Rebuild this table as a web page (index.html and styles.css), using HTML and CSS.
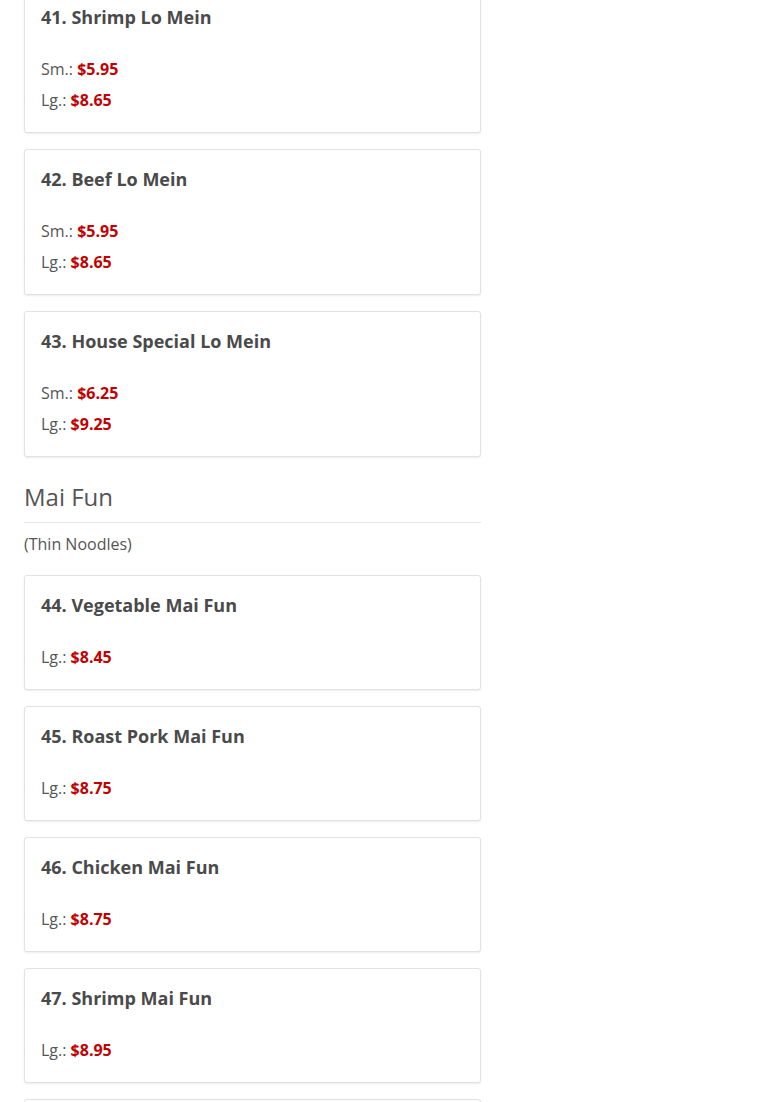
FILE: index.html
```html
<!DOCTYPE html>
<html>
<head>
<meta charset="utf-8">
<link rel="stylesheet" href="styles.css">
</head>
<body>
<div class="menu">
  <div class="card">
    <h3 class="title">41. Shrimp Lo Mein</h3>
    <div class="prices">
      <div class="row">Sm.: <span class="price">$5.95</span></div>
      <div class="row">Lg.: <span class="price">$8.65</span></div>
    </div>
  </div>
  <div class="card">
    <h3 class="title">42. Beef Lo Mein</h3>
    <div class="prices">
      <div class="row">Sm.: <span class="price">$5.95</span></div>
      <div class="row">Lg.: <span class="price">$8.65</span></div>
    </div>
  </div>
  <div class="card">
    <h3 class="title">43. House Special Lo Mein</h3>
    <div class="prices">
      <div class="row">Sm.: <span class="price">$6.25</span></div>
      <div class="row">Lg.: <span class="price">$9.25</span></div>
    </div>
  </div>

  <h2 class="section">Mai Fun</h2>
  <p class="note">(Thin Noodles)</p>

  <div class="card">
    <h3 class="title">44. Vegetable Mai Fun</h3>
    <div class="prices">
      <div class="row">Lg.: <span class="price">$8.45</span></div>
    </div>
  </div>
  <div class="card">
    <h3 class="title">45. Roast Pork Mai Fun</h3>
    <div class="prices">
      <div class="row">Lg.: <span class="price">$8.75</span></div>
    </div>
  </div>
  <div class="card">
    <h3 class="title">46. Chicken Mai Fun</h3>
    <div class="prices">
      <div class="row">Lg.: <span class="price">$8.75</span></div>
    </div>
  </div>
  <div class="card">
    <h3 class="title">47. Shrimp Mai Fun</h3>
    <div class="prices">
      <div class="row">Lg.: <span class="price">$8.95</span></div>
    </div>
  </div>
  <div class="card">
    <h3 class="title">48. Beef Mai Fun</h3>
    <div class="prices">
      <div class="row">Lg.: <span class="price">$8.95</span></div>
    </div>
  </div>
</div>
</body>
</html>
```

FILE: styles.css
```css
html, body {
  margin: 0;
  padding: 0;
  background: #fff;
  overflow: hidden;
}
body {
  font-family: "Open Sans", "Liberation Sans", sans-serif;
  color: #555;
  font-size: 16px;
}
.menu {
  width: 457px;
  margin: -13px 0 0 24px;
}
.card {
  border: 1px solid #e2e2e2;
  border-radius: 3px;
  box-shadow: 0 1px 2px rgba(0, 0, 0, 0.08);
  padding: 16px;
  margin-bottom: 16px;
  background: #fff;
}
.title {
  margin: 0 0 24px;
  font-size: 18px;
  line-height: 26px;
  font-weight: 700;
  color: #4a4a4a;
}
.row {
  line-height: 31px;
  font-size: 16px;
  color: #555;
}
.price {
  color: #c20000;
  font-weight: 700;
}
.section {
  margin: 25px 0 0;
  padding-bottom: 10px;
  border-bottom: 1px solid #e6e6e6;
  font-size: 24px;
  line-height: 30px;
  font-weight: 400;
  color: #555;
}
.note {
  margin: 9px 0 19px;
  line-height: 24px;
  font-size: 16px;
  color: #555;
}
```
